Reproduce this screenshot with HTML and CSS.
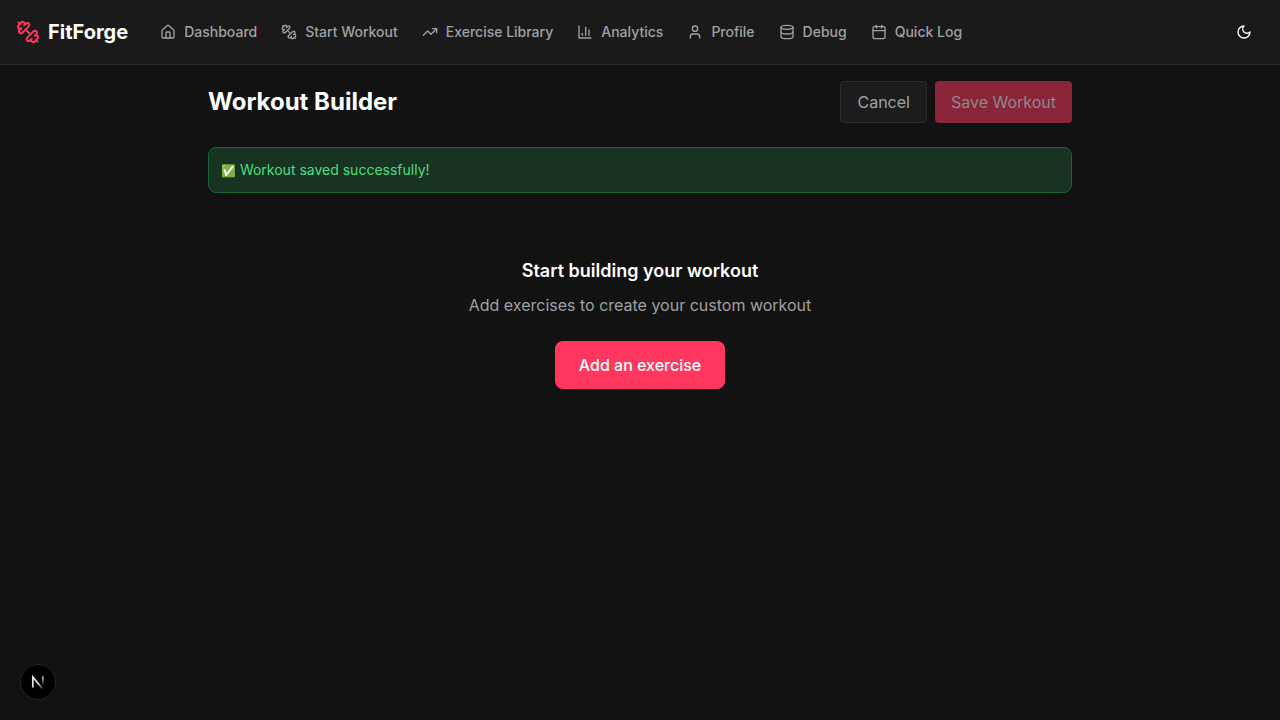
FILE: index.html
```html
<!DOCTYPE html>
<html lang="en">
<head>
<meta charset="utf-8">
<meta name="viewport" content="width=device-width, initial-scale=1">
<title>FitForge</title>
<link rel="stylesheet" href="styles.css">
</head>
<body>
<svg class="sprite" aria-hidden="true">
  <symbol id="dumbbell" viewBox="0 0 24 24">
    <path d="M14.4 14.4 9.6 9.6"/>
    <path d="M18.657 21.485a2 2 0 1 1-2.829-2.828l-1.767 1.768a2 2 0 1 1-2.829-2.829l6.364-6.364a2 2 0 1 1 2.829 2.829l-1.768 1.767a2 2 0 1 1 2.828 2.829z"/>
    <path d="m21.5 21.5-1.4-1.4"/>
    <path d="M3.9 3.9 2.5 2.5"/>
    <path d="M6.404 12.768a2 2 0 1 1-2.829-2.829l1.768-1.767a2 2 0 1 1-2.828-2.829l2.828-2.828a2 2 0 1 1 2.829 2.828l1.767-1.768a2 2 0 1 1 2.829 2.829z"/>
  </symbol>
</svg>
<header class="header">
  <a class="brand" href="#"><svg class="icon icon-lg" aria-hidden="true"><use href="#dumbbell"/></svg><span class="brand-name">FitForge</span></a>
  <nav class="nav">
    <a class="nav-link" href="#"><svg class="icon" viewBox="0 0 24 24" aria-hidden="true"><path d="M15 21v-8a1 1 0 0 0-1-1h-4a1 1 0 0 0-1 1v8"/><path d="M3 10a2 2 0 0 1 .709-1.528l7-5.999a2 2 0 0 1 2.582 0l7 5.999A2 2 0 0 1 21 10v9a2 2 0 0 1-2 2H5a2 2 0 0 1-2-2z"/></svg><span>Dashboard</span></a>
    <a class="nav-link" href="#"><svg class="icon" aria-hidden="true"><use href="#dumbbell"/></svg><span>Start Workout</span></a>
    <a class="nav-link" href="#"><svg class="icon" viewBox="0 0 24 24" aria-hidden="true"><path d="M22 7 13.5 15.5 8.5 10.5 2 17"/><path d="M16 7h6v6"/></svg><span>Exercise Library</span></a>
    <a class="nav-link" href="#"><svg class="icon" viewBox="0 0 24 24" aria-hidden="true"><path d="M3 3v18h18"/><path d="M18 17V9"/><path d="M13 17V5"/><path d="M8 17v-3"/></svg><span>Analytics</span></a>
    <a class="nav-link" href="#"><svg class="icon" viewBox="0 0 24 24" aria-hidden="true"><path d="M19 21v-2a4 4 0 0 0-4-4H9a4 4 0 0 0-4 4v2"/><circle cx="12" cy="7" r="4"/></svg><span>Profile</span></a>
    <a class="nav-link" href="#"><svg class="icon" viewBox="0 0 24 24" aria-hidden="true"><ellipse cx="12" cy="5" rx="9" ry="3"/><path d="M3 5V19A9 3 0 0 0 21 19V5"/><path d="M3 12A9 3 0 0 0 21 12"/></svg><span>Debug</span></a>
    <a class="nav-link" href="#"><svg class="icon" viewBox="0 0 24 24" aria-hidden="true"><path d="M8 2v4"/><path d="M16 2v4"/><rect width="18" height="18" x="3" y="4" rx="2"/><path d="M3 10h18"/></svg><span>Quick Log</span></a>
  </nav>
  <button class="theme-toggle" type="button" aria-label="Toggle theme"><svg class="icon" viewBox="0 0 24 24" aria-hidden="true"><path d="M12 3a6 6 0 0 0 9 9 9 9 0 1 1-9-9Z"/></svg></button>
</header>
<main class="main">
  <div class="title-row">
    <h1 class="title">Workout Builder</h1>
    <div class="actions">
      <button class="button button-cancel" type="button">Cancel</button>
      <button class="button button-save" type="button" disabled>Save Workout</button>
    </div>
  </div>
  <div class="notice" role="status"><span class="notice-mark">✅</span> Workout saved successfully!</div>
  <section class="empty">
    <h2 class="empty-title">Start building your workout</h2>
    <p class="empty-text">Add exercises to create your custom workout</p>
    <button class="button-primary" type="button">Add an exercise</button>
  </section>
</main>
<button class="dev-badge" type="button" aria-label="Open developer tools">
  <svg class="dev-logo" viewBox="0 0 14 14" fill="none" aria-hidden="true">
    <defs>
      <linearGradient id="fade-diagonal" gradientUnits="userSpaceOnUse" x1="8" y1="8" x2="13" y2="14"><stop stop-color="#fff"/><stop offset="1" stop-color="#fff" stop-opacity="0"/></linearGradient>
      <linearGradient id="fade-stem" gradientUnits="userSpaceOnUse" x1="0" y1="1" x2="0" y2="11"><stop stop-color="#fff"/><stop offset="1" stop-color="#fff" stop-opacity="0"/></linearGradient>
    </defs>
    <path d="M1.8 12.6V2L11.8 14" stroke="url(#fade-diagonal)" stroke-width="1.7"/>
    <path d="M11.8 1.4v8.6" stroke="url(#fade-stem)" stroke-width="1.6"/>
  </svg>
</button>
</body>
</html>
```

FILE: styles.css
```css
*, *::before, *::after { box-sizing: border-box; }
body {
  margin: 0;
  min-height: 100vh;
  background: #121212;
  color: #fff;
  font-family: Inter, "Noto Color Emoji", sans-serif;
  font-size: 16px;
  line-height: 24px;
}
h1, h2, p { margin: 0; }
button { font: inherit; cursor: pointer; }
a { color: inherit; text-decoration: none; }
.sprite { display: none; }
.icon {
  width: 16px;
  height: 16px;
  flex: none;
  fill: none;
  stroke: currentColor;
  stroke-width: 2;
  stroke-linecap: round;
  stroke-linejoin: round;
}
.icon-lg { width: 24px; height: 24px; color: #ff375f; }
.header {
  display: flex;
  align-items: center;
  gap: 32px;
  padding: 12px 16px;
  background: #1a1a1a;
  border-bottom: 1px solid #2c2c2e;
}
.brand { display: flex; align-items: center; gap: 8px; }
.brand-name { font-size: 20px; line-height: 28px; font-weight: 700; }
.nav { display: flex; align-items: center; gap: 24px; }
.nav-link {
  display: flex;
  align-items: center;
  gap: 8px;
  color: #a1a1a1;
  font-size: 14px;
  line-height: 20px;
  font-weight: 500;
}
.theme-toggle {
  display: flex;
  align-items: center;
  justify-content: center;
  width: 40px;
  height: 40px;
  margin-left: auto;
  padding: 0;
  border: 0;
  border-radius: 6px;
  background: transparent;
  color: #fff;
}
.main { max-width: 896px; margin: 0 auto; padding: 16px; }
.title-row {
  display: flex;
  align-items: center;
  justify-content: space-between;
  margin-bottom: 24px;
}
.title { font-size: 24px; line-height: 32px; font-weight: 700; }
.actions { display: flex; gap: 8px; }
.button { padding: 8px 16px; border: 0; border-radius: 4px; }
.button-cancel { background: #1c1c1e; border: 1px solid #2c2c2e; color: #a1a1a1; }
.button-save { background: #8a2438; color: #8a8a8a; cursor: default; }
.notice {
  padding: 12px;
  border: 1px solid #166534;
  border-radius: 8px;
  background: #183322;
  color: #4ade80;
  font-size: 14px;
  line-height: 20px;
}
.notice-mark { font-size: 12px; line-height: 16px; }
.empty {
  display: flex;
  flex-direction: column;
  align-items: center;
  padding: 64px 0;
  text-align: center;
}
.empty-title { margin-bottom: 8px; font-size: 18px; line-height: 28px; font-weight: 600; }
.empty-text { margin-bottom: 24px; color: #a1a1a1; }
.button-primary {
  padding: 12px 24px;
  border: 0;
  border-radius: 8px;
  background: #ff375f;
  color: #fff;
  font-weight: 500;
}
.dev-badge {
  position: fixed;
  left: 20px;
  bottom: 20px;
  display: flex;
  align-items: center;
  justify-content: center;
  width: 36px;
  height: 36px;
  padding: 0;
  border: 1px solid #262626;
  border-radius: 50%;
  background: #000;
  box-shadow: 0 16px 32px -8px rgba(0, 0, 0, 0.24);
}
.dev-logo { width: 14px; height: 14px; opacity: 0.9; }
```
